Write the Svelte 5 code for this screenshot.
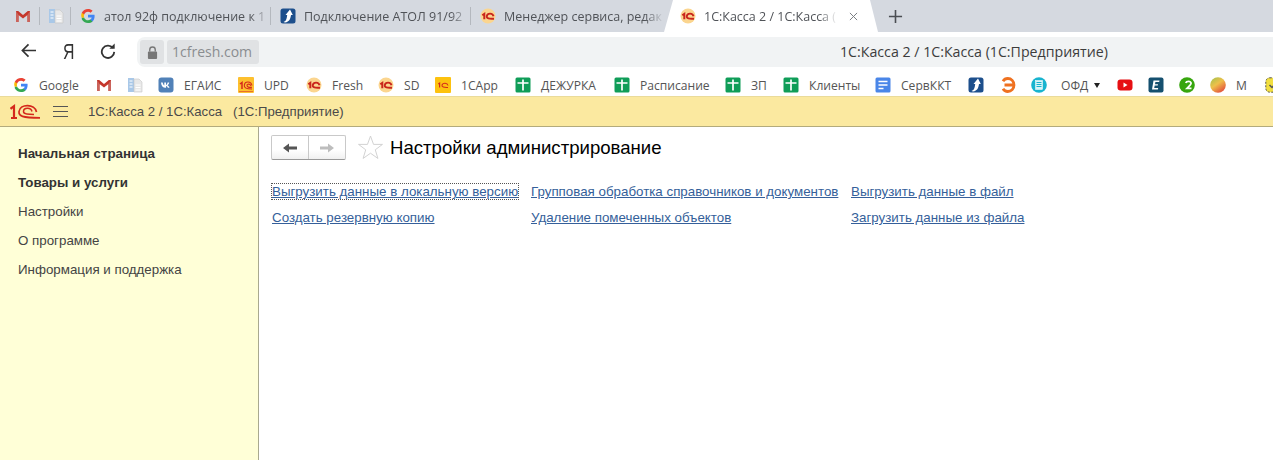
<script>
  const bookmarks = [
    { x: 13, w: 83, icon: 'g', label: 'Google' },
    { x: 96, w: 31, icon: 'gm' },
    { x: 127, w: 31, icon: 'doc' },
    { x: 158, w: 80, icon: 'vk', label: 'ЕГАИС' },
    { x: 238, w: 68, icon: 'c1y', label: 'UPD' },
    { x: 306, w: 72, icon: 'c1', label: 'Fresh' },
    { x: 378, w: 57, icon: 'c1', label: 'SD' },
    { x: 435, w: 80, icon: 'c1b', label: '1CApp' },
    { x: 515, w: 99, icon: 'sheet', label: 'ДЕЖУРКА' },
    { x: 614, w: 111, icon: 'sheet', label: 'Расписание' },
    { x: 725, w: 58, icon: 'sheet', label: 'ЗП' },
    { x: 783, w: 92, icon: 'sheet', label: 'Клиенты' },
    { x: 875, w: 93, icon: 'gdoc', label: 'СервККТ' },
    { x: 968, w: 32, icon: 'iru' },
    { x: 1000, w: 31, icon: 'e' },
    { x: 1031, w: 30, icon: 'circ' },
    { x: 1061, w: 56, label: 'ОФД', caret: true },
    { x: 1117, w: 31, icon: 'yt' },
    { x: 1148, w: 31, icon: 'ee' },
    { x: 1179, w: 31, icon: 'two' },
    { x: 1210, w: 55, icon: 'ball', label: 'М' },
    { x: 1265, w: 16, icon: 'chk' }
  ];
  const tabs = [
    { w: 200, icon: 'g', label: 'атол 92ф подключение к 1' },
    { w: 200, icon: 'iru', label: 'Подключение АТОЛ 91/92' },
    { w: 193, icon: 'c1', label: 'Менеджер сервиса, редак' }
  ];
  const menu = [
    { label: 'Начальная страница', bold: true },
    { label: 'Товары и услуги', bold: true },
    { label: 'Настройки' },
    { label: 'О программе' },
    { label: 'Информация и поддержка' }
  ];
  const linkCols = [
    { w: 259, links: ['Выгрузить данные в локальную версию', 'Создать резервную копию'] },
    { w: 320, links: ['Групповая обработка справочников и документов', 'Удаление помеченных объектов'] },
    { w: 260, links: ['Выгрузить данные в файл', 'Загрузить данные из файла'] }
  ];
</script>

{#snippet icon(name)}
  <svg class="ico" viewBox="0 0 16 16" aria-hidden="true">
    {#if name === 'g'}
      <path d="M14.6 8.2c0-.5 0-1-.1-1.4H8v2.7h3.7c-.2.9-.6 1.6-1.4 2.1v1.8h2.2c1.3-1.2 2.1-3 2.1-5.2z" fill="#4285f4"/>
      <path d="M8 15c1.9 0 3.4-.6 4.5-1.6l-2.2-1.8c-.6.4-1.4.7-2.3.7-1.8 0-3.3-1.2-3.9-2.9H1.8v1.8C2.9 13.4 5.300 15 8 15z" fill="#34a853"/>
      <path d="M4.100 9.400c-.3-.9-.3-1.900 0-2.800V4.800H1.800c-.8 1.500-.8 3.400 0 4.900z" fill="#fbbc05"/>
      <path d="M8 3.700c1 0 1.900.4 2.600 1l2-2C11.400 1.700 9.800 1 8 1 5.300 1 2.900 2.600 1.800 4.800l2.300 1.800C4.700 4.900 6.200 3.700 8 3.700z" fill="#ea4335"/>
    {:else if name === 'gm'}
      <path d="M1 3h2.200L8 7l4.800-4H15v11h-2.800V7.300L8 10.600 3.800 7.300V14H1z" fill="#c5372c"/>
      <path d="M3.800 7.300V14H1V3zM12.200 7.300V14H15V3z" fill="#d9d9d9" opacity=".28"/>
    {:else if name === 'doc'}
      <path d="M1 1h6v14H1z" fill="#a9c8e8"/>
      <path d="M7 2h5l3 3v10H7z" fill="#e8e8e8" stroke="#c6c6c6" stroke-width=".6"/>
      <path d="M2.500 4h3M2.500 7h3M2.500 10h3M8.500 8h5M8.500 10.500h5M8.500 13h5" stroke="#fff" stroke-width="1"/>
    {:else if name === 'vk'}
      <rect x="0.500" y="0.500" width="15" height="15" rx="3" fill="#5181b8"/>
      <path d="M3 5.500h1.700c.2 1.500 1 2.700 1.600 2.900V5.500H8v2.400c.7-.1 1.300-1.100 1.600-2.400h1.600c-.2 1.300-1 2.300-1.600 2.800.7.400 1.500 1.200 1.900 2.500H9.800c-.3-.9-1-1.600-1.800-1.700v1.700h-.5C5 10.800 3.200 8.800 3 5.500z" fill="#fff"/>
    {:else if name === 'c1y'}
      <rect width="16" height="16" y="0" rx="1" fill="#fdc02f"/>
      <path d="M2 7l2-1.500V12" fill="none" stroke="#d5281c" stroke-width="1.500"/>
      <path d="M14 8.500C13 4 7 4 6.300 8c-.5 3 2 4 7.700 4M14 10.300c-3 .2-5 0-5-2 0-1.500 3-1.800 3.800.4" fill="none" stroke="#d5281c" stroke-width="1.100"/>
      <path d="M1 14.500h14" stroke="#e8712b" stroke-width="1"/>
    {:else if name === 'c1'}
      <circle cx="8" cy="8" r="7.500" fill="#fbd58f"/>
      <path d="M2.300 7.200l2-1.400v5.400" fill="none" stroke="#c9261c" stroke-width="2"/>
      <path d="M13.500 8.300C12.800 4.800 7.500 4.800 6.800 8c-.5 2.600 2.500 3 7.200 2.700" fill="none" stroke="#c9261c" stroke-width="1.900"/>
    {:else if name === 'c1b'}
      <rect width="16" height="16" rx="1" fill="#fdc20f"/>
      <path d="M3.300 7l1.300-.9V10.500" fill="none" stroke="#d5281c" stroke-width="1.200"/>
      <path d="M13 8.500C12.300 5.500 8 5.500 7 8c-.5 2 2 2.700 6 2.500" fill="none" stroke="#d5281c" stroke-width="1.100"/>
    {:else if name === 'sheet'}
      <rect x="0.500" y="0.500" width="15" height="15" rx="1.500" fill="#0f9d58"/>
      <path d="M2.500 6h11M8 2.500V13.500" stroke="#fff" stroke-width="1.700"/>
    {:else if name === 'gdoc'}
      <rect x="0.500" y="0.500" width="15" height="15" rx="1.500" fill="#4a86e8"/>
      <path d="M3.500 4.500h9M3.500 8h9M3.500 11.500h5" stroke="#fff" stroke-width="1.700"/>
    {:else if name === 'iru'}
      <rect x="0.500" y="0.500" width="15" height="15" rx="2.500" fill="#1d4f8c"/>
      <path d="M3.500 14C6.500 13 6.800 10 7.200 7H5.500L10 1.500 12.800 7H11C10.500 10.500 9.500 14 5 14.500z" fill="#fff"/>
    {:else if name === 'e'}
      <path d="M3 4.200C4 2.500 5.800 1.500 7.800 1.500c3.600 0 6.200 2.900 6.200 6.500s-2.600 6.500-6.200 6.500c-2 0-3.800-1-4.800-2.700M4.500 8h8" fill="none" stroke="#ef7120" stroke-width="2.800"/>
    {:else if name === 'circ'}
      <circle cx="8" cy="8" r="7.800" fill="#18b4cf"/>
      <rect x="4.500" y="3.500" width="7" height="9" fill="#d9f4f8" stroke="#fff" stroke-width=".5"/>
      <path d="M5.500 5.500h5M5.500 7.500h5M5.500 9.500h5" stroke="#18b4cf" stroke-width="1"/>
    {:else if name === 'yt'}
      <rect x="0.500" y="2.500" width="15" height="11" rx="3" fill="#e60f13"/>
      <path d="M6.500 5.500v5l4-2.500z" fill="#fff"/>
    {:else if name === 'ee'}
      <rect x="0.500" y="0.500" width="15" height="15" rx="2" fill="#15506f"/>
      <path d="M5.500 3.500h6l-.3 1.500h-3.800l-.4 2.200h3l-.3 1.300h-3l-.5 2.500h4l-.3 1.500H4z" fill="#fff"/>
    {:else if name === 'two'}
      <circle cx="8" cy="8" r="7.800" fill="#37a60e"/>
      <path d="M6.800 6c.5-2 5.300-2.300 5.300.3 0 1.500-2 2.800-4.100 5h4.500" fill="none" stroke="#fff" stroke-width="1.800"/>
    {:else if name === 'ball'}
      <defs>
        <linearGradient id="ballg" x1="0" y1="0" x2=".7" y2="1">
          <stop offset="0" stop-color="#9ec24d"/>
          <stop offset=".5" stop-color="#eec04a"/>
          <stop offset="1" stop-color="#e34f3d"/>
        </linearGradient>
      </defs>
      <circle cx="8" cy="8" r="7.800" fill="url(#ballg)"/>
    {:else if name === 'chk'}
      <rect x="0.800" y="0.800" width="14.400" height="14.400" rx="4" fill="#f1de3f" stroke="#555" stroke-width="1" stroke-dasharray="2 1.500"/>
      <path d="M4.500 8l2.500 2.500 4.500-5" fill="none" stroke="#555" stroke-width="1.500"/>
    {/if}
  </svg>
{/snippet}

<div class="page">
  <div class="tabstrip">
    <div class="pin first">{@render icon('gm')}</div>
    <div class="pin">{@render icon('doc')}</div>
    {#each tabs as t}
      <div class="tab" style="width:{t.w}px">
        {@render icon(t.icon)}
        <span class="tabtext">{t.label}</span>
      </div>
    {/each}
    <div class="tab active">
      {@render icon('c1')}
      <span class="tabtext">1С:Касса 2 / 1С:Касса (1</span>
      <svg class="close" viewBox="0 0 10 10"><path d="M1 1l8 8M9 1l-8 8" stroke="#7a7e83" stroke-width="1.100"/></svg>
    </div>
    <svg class="plus" viewBox="0 0 16 16"><path d="M8 1v14M1 8h14" stroke="#4a4d52" stroke-width="1.700"/></svg>
  </div>

  <div class="toolbar">
    <svg class="back" viewBox="0 0 18 16"><path d="M17 8H2.500M9 1.500L2.500 8 9 14.500" fill="none" stroke="#333" stroke-width="1.800"/></svg>
    <span class="ya">Я</span>
    <svg class="reload" viewBox="0 0 18 18"><path d="M14.500 5.500A7 7 0 1 0 16 10" fill="none" stroke="#333" stroke-width="2"/><path d="M10.500 6.500h6v-6z" fill="#333"/></svg>
    <div class="omnibox">
      <div class="lock"><svg viewBox="0 0 12 14"><path d="M3 6V4a3 3 0 0 1 6 0v2" fill="none" stroke="#777" stroke-width="1.500"/><rect x="1" y="6" width="10" height="8" rx="1" fill="#777"/></svg></div>
      <div class="host">1cfresh.com</div>
      <div class="title">1С:Касса 2 / 1С:Касса (1С:Предприятие)</div>
    </div>
  </div>

  <div class="bookmarks">
    {#each bookmarks as b}
      <div class="bm" style="width:{b.w}px">
        {#if b.icon}{@render icon(b.icon)}{/if}
        {#if b.label}<span>{b.label}</span>{/if}
        {#if b.caret}<i class="caret"></i>{/if}
      </div>
    {/each}
  </div>

  <header class="appbar">
    <svg class="logo" viewBox="0 0 30 15">
      <path d="M.5 4.800L4 2.200V14M1 14h6" fill="none" stroke="#d5281c" stroke-width="2.200"/>
      <path d="M26.500 8C25-.5 10-.5 9 7.500 8.500 12 12 13.800 30 13.800" fill="none" stroke="#d5281c" stroke-width="1.700"/>
      <path d="M24 10.500c-5 0-10.500 0-10.500-3C13.500 3.500 21 3 22 7.500" fill="none" stroke="#d5281c" stroke-width="1.500"/>
    </svg>
    <div class="burger"><i></i><i></i><i></i></div>
    <div class="apptitle">1С:Касса 2 / 1С:Касса &nbsp; (1С:Предприятие)</div>
  </header>

  <div class="main">
    <nav class="side">
      {#each menu as m}
        <div class="menuitem" class:bold={m.bold}>{m.label}</div>
      {/each}
    </nav>
    <section class="content">
      <div class="head">
        <div class="navbtns">
          <button class="nb"><svg viewBox="0 0 14 10"><path d="M0 5l6-4.500V3.500h8v3H6v3z" fill="#555"/></svg></button>
          <button class="nb"><svg viewBox="0 0 14 10"><path d="M14 5L8 .5V3.500H0v3h8v3z" fill="#bdbdbd"/></svg></button>
        </div>
        <svg class="star" viewBox="0 0 24 24"><path d="M12 1l2.900 8h8.600l-6.900 5.200 2.500 8.300L12 17.500l-7.100 5 2.500-8.300L.5 9h8.600z" fill="#fff" stroke="#cfcfcf" stroke-width=".9"/></svg>
        <h1>Настройки администрирование</h1>
      </div>
      <div class="links">
        {#each linkCols as c, ci}
          <div class="col" style="width:{c.w}px">
            {#each c.links as l, li}
              <div class="linkrow"><a href="#top" class:focus={ci === 0 && li === 0} onclick={(e) => e.preventDefault()}>{l}</a></div>
            {/each}
          </div>
        {/each}
      </div>
    </section>
  </div>
</div>

<style>
  :global(body) { margin: 0; background: #fff; }
  .page { width: 1273px; height: 460px; overflow: hidden; display: flex; flex-direction: column; font-family: "Liberation Sans", Arial, sans-serif; }
  .ico { width: 16px; height: 16px; flex: none; display: block; }

  .tabstrip { height: 32px; flex: none; background: #d5d9e0; display: flex; align-items: center; font-family: "Open Sans", sans-serif; font-size: 12.5px; color: #505358; }
  .pin { width: 31px; flex: none; height: 18px; display: flex; align-items: center; padding-left: 8px; box-sizing: border-box; border-right: 1px solid #b4b8be; }
  .pin.first { width: 40px; padding-left: 15px; }
  .tab { flex: none; height: 18px; display: flex; align-items: center; gap: 8px; padding-left: 9px; box-sizing: border-box; border-right: 1px solid #b4b8be; overflow: hidden; }
  .tab:nth-child(5) { border-right: none; }
  .tabtext { white-space: nowrap; flex: 1; min-width: 0; -webkit-mask-image: linear-gradient(90deg, #000 88%, transparent 100%); mask-image: linear-gradient(90deg, #000 88%, transparent 100%); }
  .tab.active { width: 214px; height: 32px; background: #fff; align-self: flex-end; padding-left: 16px; padding-right: 20px; border: none; clip-path: polygon(0 100%, 9px 0, 206px 0, 100% 100%); }
  .tab.active .tabtext { -webkit-mask-image: linear-gradient(90deg, #000 86%, rgba(0,0,0,.25) 97%, transparent 100%); mask-image: linear-gradient(90deg, #000 86%, rgba(0,0,0,.25) 97%, transparent 100%); }
  .close { width: 9px; height: 9px; flex: none; margin-left: 4px; }
  .plus { width: 15px; height: 15px; margin-left: 10px; flex: none; }

  .toolbar { height: 35px; flex: none; background: #fff; display: flex; align-items: flex-end; position: relative; }
  .back { width: 17px; height: 15px; margin: 0 0 9px 20px; flex: none; }
  .ya { font-family: "Liberation Sans", sans-serif; font-size: 22px; color: #333; width: 14px; margin: 0 0 3px 24px; line-height: 24px; transform: scaleX(.72); }
  .reload { width: 16px; height: 16px; margin: 0 0 8px 25px; flex: none; }
  .omnibox { margin-left: 21px; flex: 1; height: 30px; background: #f1f3f4; border-radius: 8px 0 0 8px; display: flex; align-items: center; padding-left: 3px; gap: 3px; position: relative; }
  .lock { width: 24px; height: 24px; background: #e0e2e4; border-radius: 3px; display: flex; align-items: center; justify-content: center; }
  .lock svg { width: 11px; height: 13px; }
  .host { width: 92px; height: 24px; background: #e0e2e4; border-radius: 3px; font-family: "Open Sans", sans-serif; font-size: 14px; color: #8a8d90; line-height: 24px; padding-left: 5px; box-sizing: border-box; }
  .title { position: absolute; left: 703px; top: 0; line-height: 30px; font-family: "Open Sans", sans-serif; font-size: 14.2px; color: #3c3c3c; white-space: nowrap; }

  .bookmarks { height: 29px; box-sizing: border-box; padding: 7px 0 0 13px; flex: none; display: flex; align-items: center; background: #fff; font-family: "Open Sans", sans-serif; font-size: 12.1px; color: #555; }
  .bm { flex: none; display: flex; align-items: center; gap: 10px; white-space: nowrap; }
  .caret { width: 0; height: 0; border-left: 3.500px solid transparent; border-right: 3.500px solid transparent; border-top: 5px solid #222; margin-left: -4px; }

  .appbar { height: 31px; flex: none; box-sizing: border-box; background: #fbe9a0; border-top: 1px solid #eadb9a; border-bottom: 1px solid #b3ab7c; display: flex; align-items: center; }
  .logo { width: 30px; height: 15px; margin-left: 10px; flex: none; }
  .burger { margin-left: 13px; width: 15px; display: flex; flex-direction: column; gap: 4px; }
  .burger i { display: block; height: 1px; background: #555; }
  .apptitle { margin-left: 20px; font-size: 13.2px; color: #4a4a4a; white-space: nowrap; }

  .main { flex: 1; display: flex; min-height: 0; }
  .side { width: 259px; flex: none; box-sizing: border-box; background: #ffffd7; border-right: 1px solid #a9a98f; padding: 19px 0 0 18px; display: flex; flex-direction: column; gap: 14px; }
  .menuitem { font-size: 13.33px; line-height: 15px; color: #444; }
  .menuitem.bold { font-weight: 700; color: #333; }
  .content { flex: 1; padding: 8px 0 0 12px; }
  .head { display: flex; align-items: center; height: 25px; }
  .navbtns { display: flex; width: 75px; height: 25px; box-sizing: border-box; border: 1px solid #c9c9c9; border-bottom-color: #999; border-radius: 2px; background: linear-gradient(#fff 60%, #f0f0f0); overflow: hidden; }
  .nb { flex: 1; border: 0; background: none; padding: 0; display: flex; align-items: center; justify-content: center; }
  .nb + .nb { border-left: 1px solid #c9c9c9; }
  .nb svg { width: 14px; height: 10px; }
  .star { width: 25px; height: 25px; margin-left: 12px; flex: none; }
  h1 { font-size: 18.6px; font-weight: 400; color: #000; margin: 0 0 0 7px; white-space: nowrap; line-height: 24px; }
  .links { display: flex; margin-top: 23px; margin-left: 1px; }
  .col { flex: none; display: flex; flex-direction: column; gap: 11px; }
  .linkrow { line-height: 15px; height: 15px; }
  a { font-size: 13.33px; color: #355f9a; text-decoration: underline; white-space: nowrap; }
  a.focus { outline: 1px dotted #555; outline-offset: 0; }
</style>
